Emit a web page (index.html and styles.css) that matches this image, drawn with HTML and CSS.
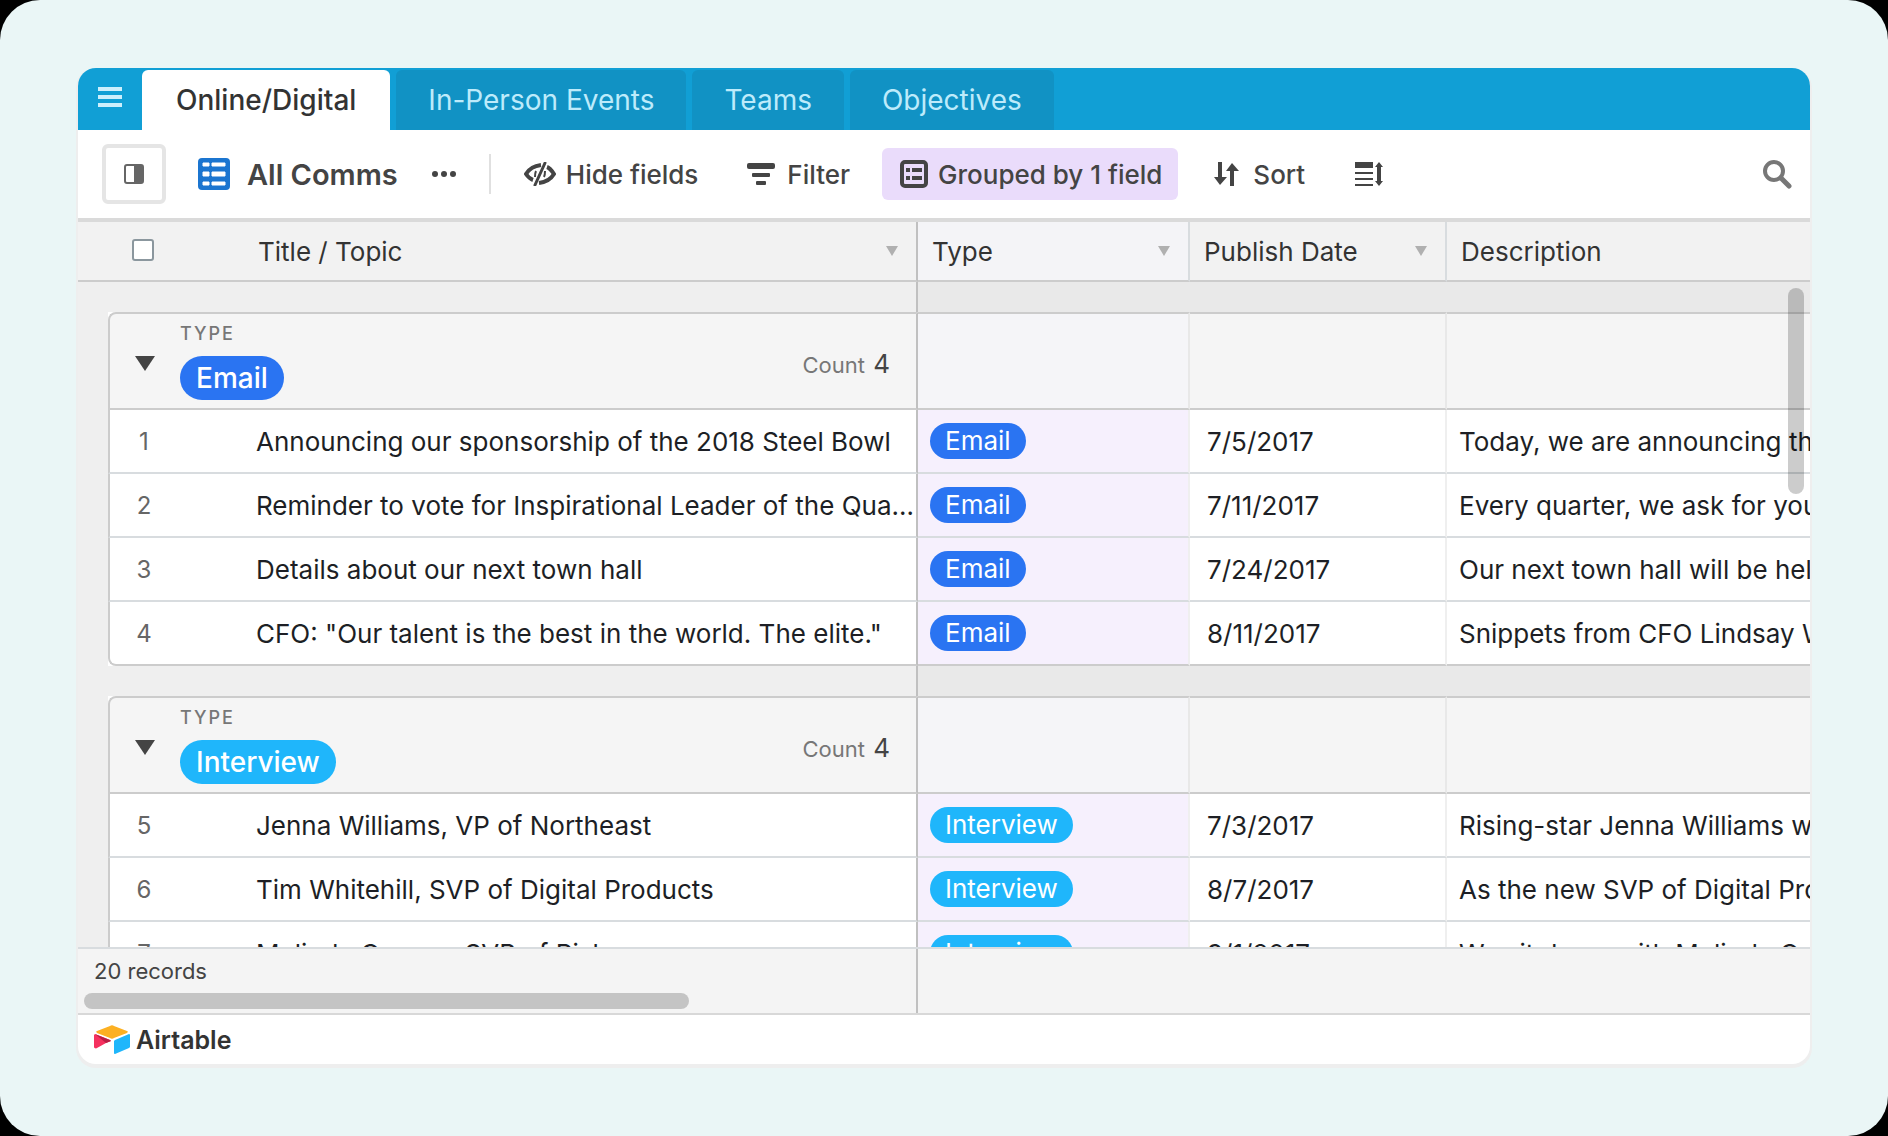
FILE: index.html
```html
<!DOCTYPE html>
<html lang="en">
<head>
    <meta charset="UTF-8">
    <title>All Comms - Airtable</title>
    <link rel="stylesheet" href="styles.css">
</head>
<body>
    <div class="stage">
        <div class="window">
            <nav class="tabs">
                <button class="menu-btn" aria-label="Menu">
                    <svg width="24" height="20" viewBox="0 0 24 20" fill="currentColor">
                        <path d="M0 0h24v4H0zM0 8h24v4H0zM0 16h24v4H0z"/>
                    </svg>
                </button>
                <a class="tab active" href="#">Online/Digital</a>
                <a class="tab" href="#">In-Person Events</a>
                <a class="tab" href="#">Teams</a>
                <a class="tab" href="#">Objectives</a>
            </nav>

            <div class="toolbar">
                <button class="panel-btn" aria-label="Toggle views">
                    <svg width="20" height="20" viewBox="0 0 20 20">
                        <rect x="1" y="1" width="18" height="18" rx="2" fill="#fff" stroke="#666" stroke-width="2"/>
                        <path d="M10 1h8a1 1 0 0 1 1 1v16a1 1 0 0 1-1 1h-8z" fill="#666"/>
                    </svg>
                </button>
                <button class="view-btn">
                    <svg width="32" height="32" viewBox="0 0 32 32">
                        <rect width="32" height="32" rx="4" fill="#1b75d0"/>
                        <path d="M5 5h6v3H5zM14 5h13v3H14zM5 14h6v4H5zM14 14h13v4H14zM5 24h6v3H5zM14 24h13v3H14z" fill="#fff" stroke="#fff" stroke-linejoin="round"/>
                    </svg>
                    <span>All Comms</span>
                </button>
                <button class="more-btn" aria-label="More options">
                    <svg width="26" height="8" viewBox="0 0 26 8" fill="currentColor">
                        <circle cx="4" cy="4" r="3"/><circle cx="13" cy="4" r="3"/><circle cx="22" cy="4" r="3"/>
                    </svg>
                </button>
                <span class="divider"></span>
                <button class="tool hide-btn">
                    <svg width="32" height="24" viewBox="0 0 32 24" fill="none" stroke="currentColor" stroke-width="4">
                        <path d="M17 3C9 4 5 7 2 12c2 3 4 5 7 6M23 5c3 1 5 4 7 7-3 5-7 8-15 9"/>
                        <path d="M21 1L11 23" stroke-width="3" stroke-linecap="round"/>
                        <path d="M12 9c-1 2-1 4-1 6M21 9c0 2 0 4-1 6" stroke-width="2"/>
                    </svg>
                    Hide fields
                </button>
                <button class="tool filter-btn">
                    <svg width="28" height="24" viewBox="0 0 28 24" fill="currentColor">
                        <rect y="1" width="28" height="6" rx="2"/><rect x="5" y="11" width="18" height="4" rx="1"/><rect x="9" y="19" width="10" height="4" rx="1"/>
                    </svg>
                    Filter
                </button>
                <button class="tool group-btn">
                    <svg width="28" height="28" viewBox="0 0 28 28" fill="currentColor">
                        <rect x="2" y="2" width="24" height="24" rx="3" fill="none" stroke="currentColor" stroke-width="4"/>
                        <path d="M6 8h4v4H6zM12 8h10v4H12zM6 16h4v4H6zM12 16h10v4H12z"/>
                    </svg>
                    Grouped by 1 field
                </button>
                <button class="tool sort-btn">
                    <svg width="26" height="24" viewBox="0 0 26 24" fill="currentColor">
                        <path d="M4 0h4v15h5l-7 8-6-8h4zM16 24h4V9h5l-7-8-6 8h4z"/>
                    </svg>
                    Sort
                </button>
                <button class="tool height-btn" aria-label="Row height">
                    <svg width="28" height="24" viewBox="0 0 28 24" fill="currentColor">
                        <path d="M0 0h18v6H0zM0 10h18v2H0zM0 16h18v2H0zM0 22h18v2H0zM22 3h4v18h-4z"/>
                        <path d="M24 0l4 5h-8zM24 24l4-5h-8z"/>
                    </svg>
                </button>
                <button class="search-btn" aria-label="Search">
                    <svg width="30" height="30" viewBox="0 0 30 30" fill="none" stroke="currentColor" stroke-width="4">
                        <circle cx="12" cy="12" r="9"/>
                        <path d="M19 19l8 8" stroke-width="5" stroke-linecap="round"/>
                    </svg>
                </button>
            </div>

            <div class="grid">
                <table>
                    <colgroup>
                        <col class="col-gutter">
                        <col class="col-num">
                        <col class="col-title">
                        <col class="col-type">
                        <col class="col-date">
                        <col>
                    </colgroup>
                    <thead>
                        <tr>
                            <th></th>
                            <th class="num"><input type="checkbox" aria-label="Select all"></th>
                            <th class="frozen"><div class="head">Title / Topic <i class="caret"></i></div></th>
                            <th class="type"><div class="head">Type <i class="caret"></i></div></th>
                            <th><div class="head">Publish Date <i class="caret"></i></div></th>
                            <th class="last"><div class="head">Description</div></th>
                        </tr>
                    </thead>
                    <tbody>
                        <tr class="band"><td colspan="3" class="frozen"></td><td colspan="3"></td></tr>
                        <tr class="group">
                            <td class="gutter"></td>
                            <td colspan="2" class="frozen corner">
                                <div class="group-head">
                                    <i class="toggle"></i>
                                    <div class="group-name">
                                        <span class="label">TYPE</span>
                                        <span class="pill big email">Email</span>
                                    </div>
                                    <span class="count">Count <b>4</b></span>
                                </div>
                            </td>
                            <td class="type"></td><td></td><td class="last"></td>
                        </tr>
                        <tr>
                            <td class="gutter"></td><td class="num">1</td>
                            <td class="frozen title">Announcing our sponsorship of the 2018 Steel Bowl</td>
                            <td class="type"><span class="pill email">Email</span></td>
                            <td>7/5/2017</td><td class="last">Today, we are announcing that we will be</td>
                        </tr>
                        <tr>
                            <td class="gutter"></td><td class="num">2</td>
                            <td class="frozen title">Reminder to vote for Inspirational Leader of the Quarter</td>
                            <td class="type"><span class="pill email">Email</span></td>
                            <td>7/11/2017</td><td class="last">Every quarter, we ask for your votes</td>
                        </tr>
                        <tr>
                            <td class="gutter"></td><td class="num">3</td>
                            <td class="frozen title">Details about our next town hall</td>
                            <td class="type"><span class="pill email">Email</span></td>
                            <td>7/24/2017</td><td class="last">Our next town hall will be held on</td>
                        </tr>
                        <tr class="group-end">
                            <td class="gutter"></td><td class="num">4</td>
                            <td class="frozen title">CFO: "Our talent is the best in the world. The elite."</td>
                            <td class="type"><span class="pill email">Email</span></td>
                            <td>8/11/2017</td><td class="last">Snippets from CFO Lindsay Williams</td>
                        </tr>
                        <tr class="band"><td colspan="3" class="frozen"></td><td colspan="3"></td></tr>
                        <tr class="group">
                            <td class="gutter"></td>
                            <td colspan="2" class="frozen corner">
                                <div class="group-head">
                                    <i class="toggle"></i>
                                    <div class="group-name">
                                        <span class="label">TYPE</span>
                                        <span class="pill big interview">Interview</span>
                                    </div>
                                    <span class="count">Count <b>4</b></span>
                                </div>
                            </td>
                            <td class="type"></td><td></td><td class="last"></td>
                        </tr>
                        <tr>
                            <td class="gutter"></td><td class="num">5</td>
                            <td class="frozen title">Jenna Williams, VP of Northeast</td>
                            <td class="type"><span class="pill interview">Interview</span></td>
                            <td>7/3/2017</td><td class="last">Rising-star Jenna Williams will</td>
                        </tr>
                        <tr>
                            <td class="gutter"></td><td class="num">6</td>
                            <td class="frozen title">Tim Whitehill, SVP of Digital Products</td>
                            <td class="type"><span class="pill interview">Interview</span></td>
                            <td>8/7/2017</td><td class="last">As the new SVP of Digital Products</td>
                        </tr>
                        <tr>
                            <td class="gutter"></td><td class="num">7</td>
                            <td class="frozen title">Melinda Cooper, SVP of Risk</td>
                            <td class="type"><span class="pill interview">Interview</span></td>
                            <td>9/1/2017</td><td class="last">We sit down with Melinda Cooper</td>
                        </tr>
                    </tbody>
                </table>
                <div class="scroll-v"></div>
            </div>

            <div class="summary">
                <div class="summary-left">
                    <span>20 records</span>
                    <div class="scroll-h"></div>
                </div>
            </div>

            <footer class="brand">
                <svg width="36" height="30" viewBox="0 0 36 30">
                    <path d="M16 1L3 6c-1 0-1 1 0 2l13 5c1 1 3 1 4 0l13-5c1-1 1-2 0-2L20 1c-1-1-3-1-4 0z" fill="#fcb022"/>
                    <path d="M20 16v12c0 1 1 1 1 1l14-6 1-1V10c0-1-1-1-1-1l-14 6z" fill="#1fb6fb"/>
                    <path d="M17 16l-5 2-9 5c-1 1-3 0-3-1V10l1-1 15 6z" fill="#f5315f"/>
                    <path d="M17 16l-5 2L1 9l15 6z" fill="#ba1e45"/>
                </svg>
                <span>Airtable</span>
            </footer>
        </div>
    </div>
</body>
</html>
```

FILE: styles.css
```css
* {
    margin: 0;
    padding: 0;
    box-sizing: border-box;
}

body {
    background: #000;
    font-family: Inter, "Liberation Sans", sans-serif;
    font-size: 26px;
    color: #1d1f25;
}

button {
    background: none;
    border: none;
    font: inherit;
    color: inherit;
    cursor: pointer;
}

svg {
    display: block;
    flex: none;
}

.stage {
    height: 100vh;
    padding: 68px 78px 72px;
    background: #eaf6f6;
    border-radius: 40px;
}

.window {
    height: 100%;
    display: flex;
    flex-direction: column;
    background: #fff;
    border-radius: 18px;
    box-shadow: 0 2px 0 2px #eee;
    overflow: hidden;
}

/* tabs */
.tabs {
    display: flex;
    gap: 6px;
    height: 62px;
    padding-top: 2px;
    background: #119fd5;
}

.menu-btn {
    padding: 0 14px 6px 20px;
    color: #cdeffc;
}

.tab {
    padding: 0 32px;
    line-height: 60px;
    font-size: 28px;
    color: #bdebfb;
    text-decoration: none;
    background: #1192c4;
    border-radius: 6px 6px 0 0;
}

.tab.active {
    padding: 0 34px;
    font-weight: 500;
    background: #fff;
    color: #333;
}

/* toolbar */
.toolbar {
    display: flex;
    align-items: center;
    height: 88px;
    padding: 0 18px 0 24px;
    font-weight: 500;
    color: #444;
}

.panel-btn {
    width: 64px;
    height: 60px;
    padding: 0 18px;
    border: 4px solid #e5e5e5;
    border-radius: 6px;
}

.view-btn {
    display: flex;
    align-items: center;
    gap: 17px;
    margin-left: 32px;
    font-size: 29px;
    font-weight: 600;
}

.more-btn {
    margin: 0 32px 0 33px;
}

.divider {
    width: 2px;
    height: 40px;
    margin-right: 33px;
    background: #e0e0e0;
}

.tool {
    display: flex;
    align-items: center;
    height: 52px;
    gap: 10px;
    margin-right: 34px;
    border-radius: 6px;
}

.hide-btn {
    margin-right: 49px;
}

.filter-btn {
    gap: 12px;
    margin-right: 32px;
}

.group-btn {
    margin-right: 36px;
    padding: 0 16px 0 18px;
    background: #eadcfb;
}

.sort-btn {
    gap: 13px;
}

.height-btn {
    margin-left: 16px;
}

.search-btn {
    margin-left: auto;
    color: #777;
}

/* grid */
.grid {
    flex: 1;
    min-height: 0;
    position: relative;
    overflow: hidden;
    border-top: 4px solid #dadada;
}

table {
    width: 100%;
    table-layout: fixed;
    border-collapse: separate;
    border-spacing: 0;
}

.col-gutter {
    width: 30px;
}

.col-num {
    width: 70px;
}

.col-title {
    width: 740px;
}

.col-type {
    width: 272px;
}

.col-date {
    width: 257px;
}

th {
    height: 60px;
    text-align: left;
    font-weight: 400;
    color: #333;
    background: #f2f2f2;
    border-bottom: 2px solid #ccc;
    border-right: 2px solid #d8dcdf;
}

th:first-child,
th.num {
    border-right: none;
}

th.type {
    background: #f4f4f7;
}

.head {
    display: flex;
    align-items: center;
    justify-content: space-between;
    padding: 0 18px 0 14px;
}

.frozen .head {
    padding-left: 80px;
}

input[type="checkbox"] {
    appearance: none;
    display: block;
    width: 22px;
    height: 22px;
    margin: 0 auto;
    background: #fff;
    border: 2px solid #8b979e;
    border-radius: 3px;
}

.caret {
    border: 6px solid transparent;
    border-top: 10px solid #b0b0b0;
    border-bottom: none;
}

td {
    height: 64px;
    padding-left: 17px;
    white-space: nowrap;
    overflow: hidden;
    background: #fff;
    border-bottom: 2px solid #d8dcdf;
    border-right: 2px solid #efefef;
}

td.last,
th.last {
    padding-left: 0;
    border-right: none;
}

td.last {
    padding-left: 12px;
}

td.gutter {
    padding: 0;
    background: #efefef;
    border-right: none;
    border-bottom: none;
}

td.num,
th.num {
    padding: 0;
    text-align: center;
}

th.num {
    padding-bottom: 2px;
}

td.num {
    font-size: 24px;
    color: #666;
    border-left: 2px solid #ccc;
    border-right: none;
}

td.frozen,
th.frozen {
    border-right: 2px solid #c0c0c0;
}

td.title {
    padding-left: 78px;
    text-overflow: ellipsis;
}

td.type {
    padding-left: 12px;
    background: #f6f0fd;
}

.group-end td:not(.gutter),
.group td:not(.gutter) {
    border-bottom-color: #ccc;
}

.group-end .num {
    border-bottom-left-radius: 8px;
}

.band td {
    height: 30px;
    background: #e9e9e9;
    border-right: none;
    border-bottom: none;
}

.band td.frozen {
    background: #efefef;
    border-right: 2px solid #c0c0c0;
}

.group td {
    height: 98px;
    background: #f5f5f5;
    border-top: 2px solid #ccc;
    border-right-color: #e8e8e8;
}

.group td.gutter {
    background: #efefef;
    border-top: none;
}

.group td.type {
    background: #f5f5f8;
}

.group td.corner {
    padding: 0;
    border-left: 2px solid #ccc;
    border-right-color: #c0c0c0;
    border-top-left-radius: 8px;
}

.group-head {
    display: flex;
    align-items: center;
    padding: 5px 26px 0 25px;
}

.toggle {
    border: 10px solid transparent;
    border-top: 15px solid #444;
    border-bottom: none;
}

.group-name {
    flex: 1;
    display: flex;
    flex-direction: column;
    align-items: flex-start;
    gap: 11px;
    padding: 0 0 4px 25px;
}

.label {
    font-size: 18px;
    font-weight: 500;
    line-height: 22px;
    letter-spacing: 2px;
    color: #777;
}

.count {
    font-size: 22px;
    color: #777;
}

.count b {
    margin-left: 2px;
    font-size: 26px;
    font-weight: 400;
    color: #444;
}

.pill {
    display: inline-block;
    height: 36px;
    padding: 0 15px;
    line-height: 36px;
    color: #fff;
    border-radius: 18px;
}

.pill.big {
    height: 44px;
    padding: 0 16px;
    line-height: 44px;
    font-size: 28px;
    font-weight: 500;
    border-radius: 22px;
}

.email {
    background: #2a74f2;
}

.interview {
    background: #1fb6fb;
}

/* overlay scrollbar */
.scroll-v {
    position: absolute;
    top: 66px;
    right: 6px;
    width: 16px;
    height: 206px;
    background: rgba(0, 0, 0, 0.2);
    border-radius: 8px;
}

/* bottom bars */
.summary {
    height: 66px;
    background: #f4f4f4;
    border-top: 2px solid #d8dcdf;
}

.summary-left {
    width: 840px;
    height: 100%;
    padding: 8px 6px 4px;
    font-size: 22px;
    line-height: 28px;
    color: #444;
    border-right: 2px solid #c0c0c0;
}

.summary-left span {
    display: block;
    padding-left: 10px;
}

.scroll-h {
    width: 605px;
    height: 16px;
    margin-top: 8px;
    background: #c4c4c4;
    border-radius: 8px;
}

.brand {
    display: flex;
    align-items: center;
    gap: 6px;
    height: 51px;
    padding-left: 16px;
    border-top: 2px solid #d8d8d8;
    font-size: 25px;
    font-weight: 600;
    color: #333;
}
```
